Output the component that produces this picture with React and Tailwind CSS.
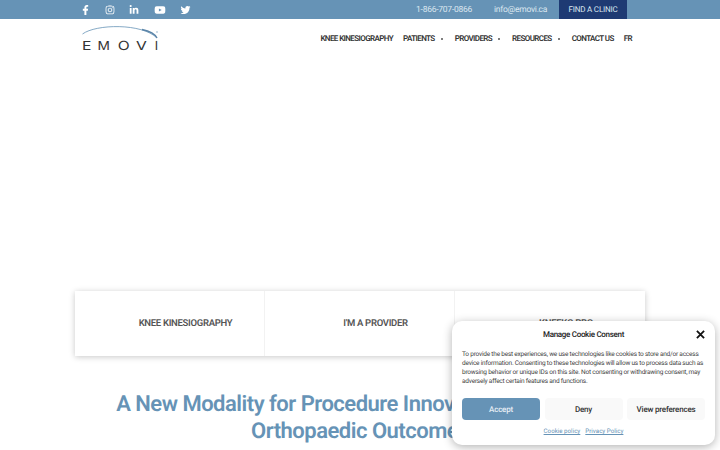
import React from "react";
import { FaFacebookF, FaInstagram, FaLinkedinIn, FaYoutube, FaTwitter } from "react-icons/fa";

const Item = ({ children, caret, cls }) => (
  <span className={`flex items-center font-semibold text-[#333] ${cls || ""}`}>
    {children}
    {caret && <span className="ml-[6px] w-[2px] h-[2px] rounded-full bg-[#555]" />}
  </span>
);

export default function App() {
  return (
    <div className="relative w-[720px] h-[450px] overflow-hidden bg-white font-['Roboto',sans-serif] [text-rendering:geometricPrecision]">
      <div className="h-[19px] bg-[#6693b6] flex items-center pl-[81px] text-white">
        <div className="flex items-center gap-[14.5px] w-[335px]">
          <FaFacebookF className="w-[9px] h-[10px]" />
          <FaInstagram className="w-[10px] h-[10px]" />
          <FaLinkedinIn className="w-[10px] h-[10px]" />
          <FaYoutube className="w-[12px] h-[10px]" />
          <FaTwitter className="w-[11px] h-[10px]" />
        </div>
        <span className="pt-[1px] text-[8.5px] tracking-[-0.25px] text-[#dce7f0] w-[78px]">1-866-707-0866</span>
        <span className="pt-[1px] text-[8.5px] tracking-[-0.25px] text-[#dce7f0] w-[65px]">info@emovi.ca</span>
        <span className="pt-[1px] h-[19px] w-[68px] bg-[#1e3a73] flex items-center justify-center text-[8px] tracking-[-0.2px] text-[#dce7f0]">FIND A CLINIC</span>
      </div>
      <div className="h-[40px] flex items-center justify-between pl-[82px] pr-[88px]">
        <div className="relative w-[77px] h-[32px]">
          <svg viewBox="0 0 77 32" className="w-[77px] h-[32px]">
            <path d="M0.5 11 C14 1 60 0 75 15" fill="none" stroke="#6693b6" strokeWidth="0.8" />
            <path d="M60 6.5 C67 8 73 11 75 15" fill="none" stroke="#5a84a8" strokeWidth="1.4" />
            <circle cx="75" cy="9" r="0.8" fill="#8fb0ca" />
          </svg>
          <div className="absolute left-0 top-[16px] w-[76px] flex justify-between text-[12.5px] leading-[15px] text-[#333] font-normal font-['Inter',sans-serif]">
            <span className="inline-block origin-left scale-x-125">E</span>
            <span className="inline-block scale-x-110">M</span>
            <span className="inline-block scale-x-125">O</span>
            <span className="inline-block scale-x-125">V</span>
            <span className="inline-block">I</span>
          </div>
        </div>
        <nav className="flex items-center text-[8px] tracking-[-0.6px]">
          <Item cls="mr-[10px]">KNEE KINESIOGRAPHY</Item>
          <Item caret cls="mr-[12px]">PATIENTS</Item>
          <Item caret cls="mr-[12px]">PROVIDERS</Item>
          <Item caret cls="mr-[12px]">RESOURCES</Item>
          <Item cls="mr-[10px]">CONTACT US</Item>
          <Item>FR</Item>
        </nav>
      </div>
      <div className="mt-[232px] ml-[75px] w-[570px] h-[65px] grid grid-cols-3 bg-white shadow-[0_1px_6px_rgba(0,0,0,0.22)] text-[#555] text-[9.5px] tracking-[-0.3px] font-semibold">
        <div className="flex items-center justify-center border-r border-[#f2f2f2] pl-[32px] pt-[1px]">KNEE KINESIOGRAPHY</div>
        <div className="flex items-center justify-center border-r border-[#f2f2f2] pl-[32px] pt-[1px]">I'M A PROVIDER</div>
        <div className="flex items-center justify-center pl-[32px] pt-[1px]">KNEEKG PRO</div>
      </div>
      <h1 className="mt-[35px] text-center text-[22px] tracking-[-0.5px] leading-[27px] font-semibold text-[#6693b6]">
        A New Modality for Procedure Innovation and Better<br />Orthopaedic Outcomes
      </h1>
      <div className="absolute left-[452px] top-[321px] w-[263px] h-[124px] bg-white rounded-[10px] shadow-[0_2px_10px_rgba(0,0,0,0.3)] px-[10px] pt-[8px]">
        <div className="relative h-[12px] text-center text-[8px] tracking-[-0.3px] leading-[12px] font-medium text-[#222]">
          Manage Cookie Consent
          <span className="absolute right-[0px] top-[1px] text-[#111]">
            <svg viewBox="0 0 10 10" className="w-[9px] h-[9px]"><path d="M1 1L9 9M9 1L1 9" stroke="#111" strokeWidth="2" /></svg>
          </span>
        </div>
        <p className="mt-[9px] text-[6.5px] tracking-[-0.22px] leading-[9px] text-[#444]">
          To provide the best experiences, we use technologies like cookies to store and/or access device information. Consenting to these technologies will allow us to process data such as browsing behavior or unique IDs on this site. Not consenting or withdrawing consent, may adversely affect certain features and functions.
        </p>
        <div className="mt-[12px] flex justify-between text-[8px] tracking-[-0.2px] font-medium">
          <span className="w-[78px] h-[22px] pt-[1px] rounded bg-[#6693b6] text-[#e6eef5] flex items-center justify-center">Accept</span>
          <span className="w-[78px] h-[22px] pt-[1px] rounded bg-[#f9f9f9] text-[#333] flex items-center justify-center">Deny</span>
          <span className="w-[78px] h-[22px] pt-[1px] rounded bg-[#f9f9f9] text-[#333] flex items-center justify-center">View preferences</span>
        </div>
        <div className="mt-[7px] flex justify-center gap-[5px] text-[6.2px] text-[#6693b6] underline">
          <span>Cookie policy</span><span>Privacy Policy</span>
        </div>
      </div>
    </div>
  );
}
